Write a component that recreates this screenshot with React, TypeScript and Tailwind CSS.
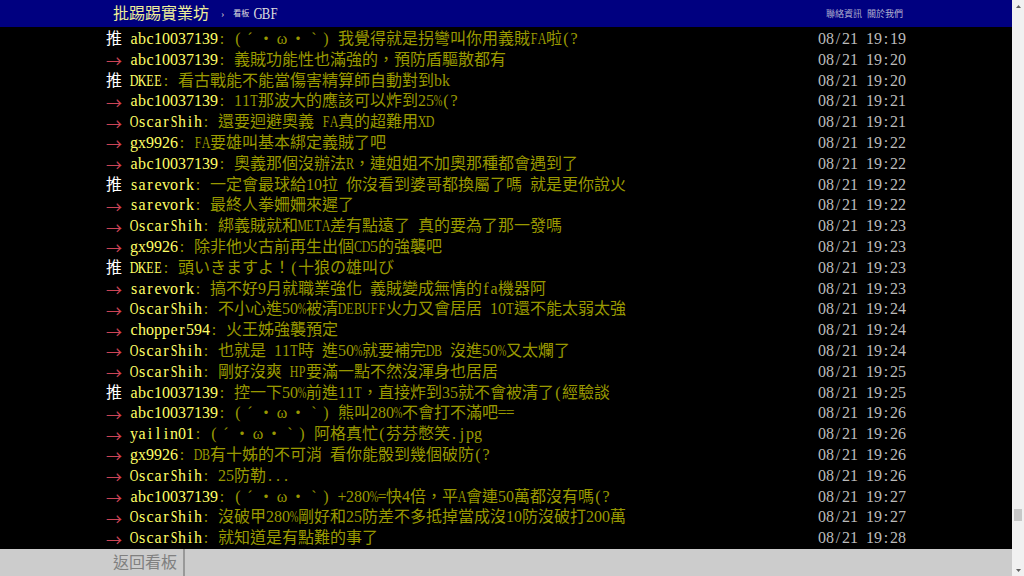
import React from "react";

type Row = [string, string, string, string];

const rows: Row[] = [
  ["推", "abc10037139", ": (ˊ・ω・ˋ) 我覺得就是拐彎叫你用義賊FA啦(?", "08/21 19:19"],
  ["→", "abc10037139", ": 義賊功能性也滿強的，預防盾驅散都有", "08/21 19:20"],
  ["推", "DKEE", ": 看古戰能不能當傷害精算師自動對到bk", "08/21 19:20"],
  ["→", "abc10037139", ": 11T那波大的應該可以炸到25%(?", "08/21 19:21"],
  ["→", "OscarShih", ": 還要迴避奧義 FA真的超難用XD", "08/21 19:21"],
  ["→", "gx9926", ": FA要雄叫基本綁定義賊了吧", "08/21 19:22"],
  ["→", "abc10037139", ": 奧義那個沒辦法R，連姐姐不加奧那種都會遇到了", "08/21 19:22"],
  ["推", "sarevork", ": 一定會最球給10拉 你沒看到婆哥都換屬了嗎 就是更你說火", "08/21 19:22"],
  ["→", "sarevork", ": 最終人拳姍姍來遲了", "08/21 19:22"],
  ["→", "OscarShih", ": 綁義賊就和META差有點遠了 真的要為了那一發嗎", "08/21 19:23"],
  ["→", "gx9926", ": 除非他火古前再生出個CD5的強襲吧", "08/21 19:23"],
  ["推", "DKEE", ": 頭いきますよ！(十狼の雄叫び", "08/21 19:23"],
  ["→", "sarevork", ": 搞不好9月就職業強化 義賊變成無情的fa機器阿", "08/21 19:23"],
  ["→", "OscarShih", ": 不小心進50%被清DEBUFF火力又會居居 10T還不能太弱太強", "08/21 19:24"],
  ["→", "chopper594", ": 火王姊強襲預定", "08/21 19:24"],
  ["→", "OscarShih", ": 也就是 11T時 進50%就要補完DB 沒進50%又太爛了", "08/21 19:24"],
  ["→", "OscarShih", ": 剛好沒爽 HP要滿一點不然沒渾身也居居", "08/21 19:25"],
  ["推", "abc10037139", ": 控一下50%前進11T，直接炸到35就不會被清了(經驗談", "08/21 19:25"],
  ["→", "abc10037139", ": (ˊ・ω・ˋ) 熊叫280%不會打不滿吧==", "08/21 19:26"],
  ["→", "yailin01", ": (ˊ・ω・ˋ) 阿格真忙(芬芬憋笑.jpg", "08/21 19:26"],
  ["→", "gx9926", ": DB有十姊的不可消 看你能骰到幾個破防(?", "08/21 19:26"],
  ["→", "OscarShih", ": 25防勒...", "08/21 19:26"],
  ["→", "abc10037139", ": (ˊ・ω・ˋ) +280%=快4倍，平A會連50萬都沒有嗎(?", "08/21 19:27"],
  ["→", "OscarShih", ": 沒破甲280%剛好和25防差不多抵掉當成沒10防沒破打200萬", "08/21 19:27"],
  ["→", "OscarShih", ": 就知道是有點難的事了", "08/21 19:28"],
];

const isNarrow = (ch: string) => ch.charCodeAt(0) < 0x80;

function charClass(ch: string) {
  if (!isNarrow(ch)) return "inline-flex w-[16px] justify-center";
  if ("MWmw%@".includes(ch)) return "inline-flex w-[8px] justify-center scale-x-[0.65]";
  if (ch >= "A" && ch <= "Z") return "inline-flex w-[8px] justify-center scale-x-[0.75]";
  return "inline-flex w-[8px] justify-center";
}

function Mono({ text, className }: { text: string; className?: string }) {
  return (
    <span className={"inline-flex items-baseline " + (className ?? "")}>
      {Array.from(text).map((ch, i) => (
        <span key={i} className={charClass(ch)}>
          {ch === " " ? "\u00a0" : ch}
        </span>
      ))}
    </span>
  );
}

function PushRow({ row }: { row: Row }) {
  const [tag, user, content, time] = row;
  const isPush = tag === "推";
  return (
    <div className="flex h-[20.8px] items-baseline whitespace-nowrap leading-[20.8px]">
      {isPush ? (
        <Mono text="推 " className="text-white" />
      ) : (
        <span className="flex w-[24px] items-center self-stretch font-['Noto_Sans_CJK_TC',sans-serif] leading-none text-[#cc4455]">
          →
        </span>
      )}
      <Mono text={user} className="text-[#ffff66]" />
      <Mono text={content} className="text-[#999900]" />
      <span className="ml-auto inline-flex items-baseline">
        <Mono text={time} className="text-[#bbbbbb]" />
      </span>
    </div>
  );
}

export default function App() {
  return (
    <div className="flex h-[576px] w-[1024px] overflow-hidden bg-black font-['Liberation_Serif','Noto_Sans_CJK_TC',serif] text-[16px]">
      <div className="flex min-w-0 flex-1 flex-col">
        {/* top bar */}
        <div className="h-[27px] shrink-0 bg-[#000080]">
          <div className="mx-auto flex h-full w-[800px] items-center pl-[7px] pr-[3px]">
            <span className="text-[16px] leading-none text-[#eeee99]">批踢踢實業坊</span>
            <span className="ml-[12px] text-[10px] leading-none text-[#cccccc]">›</span>
            <span className="ml-[9px] text-[8px] leading-none text-[#dddddd]">看板</span>
            <span className="ml-[5px] text-[17px] leading-none">
              <Mono text="GBF" className="text-[#dddddd]" />
            </span>
            <div className="ml-auto flex gap-[5px] font-['Noto_Sans_CJK_TC',sans-serif] text-[9px] leading-none text-[#b0b0d0]">
              <span>聯絡資訊</span>
              <span>關於我們</span>
            </div>
          </div>
        </div>

        {/* pushes */}
        <div className="min-h-0 flex-1 overflow-hidden bg-black pt-[2px]">
          <div className="mx-auto w-[800px]">
            {rows.map((r, i) => (
              <PushRow key={i} row={r} />
            ))}
          </div>
        </div>

        {/* bottom bar */}
        <div className="h-[27px] shrink-0 bg-[#cccccc]">
          <div className="mx-auto flex h-full w-[800px]">
            <div className="flex h-full items-center border-r-2 border-[#999999] pl-[7px] pr-[6px] text-[16px] leading-none text-[#808080]">
              返回看板
            </div>
          </div>
        </div>
      </div>

      {/* scrollbar */}
      <div className="flex h-full w-[12px] shrink-0 flex-col bg-[#f1f1f1]">
        <div className="flex h-[12px] items-center justify-center">
          <svg width="5" height="3" viewBox="0 0 5 3">
            <polygon points="2.5,0 5,3 0,3" fill="#606060" />
          </svg>
        </div>
        <div className="flex flex-1 flex-col justify-end pb-[43px]">
          <div className="mx-[2px] h-[12px] bg-[#c8c8c8]" />
        </div>
        <div className="flex h-[12px] items-center justify-center">
          <svg width="5" height="3" viewBox="0 0 5 3">
            <polygon points="0,0 5,0 2.5,3" fill="#606060" />
          </svg>
        </div>
      </div>
    </div>
  );
}
